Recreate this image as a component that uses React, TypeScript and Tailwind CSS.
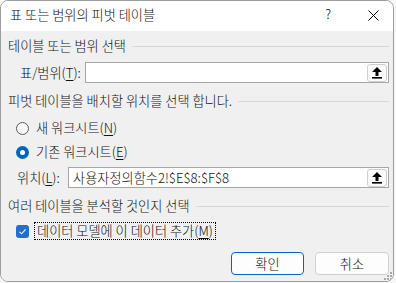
import React from "react";

const font = { fontFamily: '"Noto Sans CJK KR", "Noto Sans", sans-serif' };

const UploadIcon = () => (
    <svg width="12" height="13" viewBox="0 0 12 13">
        <path d="M6 1 L11 6 L7.5 6 L7.5 10 L4.5 10 L4.5 6 L1 6 Z" fill="#000" />
        <rect x="1" y="11" width="10" height="1.6" fill="#000" />
    </svg>
);

const SectionHeader = ({ title, className }: { title: string; className?: string }) => (
    <div className={`flex items-center h-[16px] ${className ?? ""}`}>
        <span className="whitespace-nowrap leading-[16px]">{title}</span>
        <div className="flex-1 h-px bg-[#d9d9d9] ml-[6px]"></div>
    </div>
);

const RefInput = ({ value }: { value?: string }) => (
    <div className="flex-1 h-[21px] bg-white border border-[#a6a6a6] flex items-center">
        <span className="flex-1 pl-[4px] leading-[18px] whitespace-nowrap">{value}</span>
        <button className="w-[20px] h-[18px] mr-px border border-[#d0d0d0] rounded-[3px] bg-[#fbfbfb] flex items-center justify-center">
            <UploadIcon />
        </button>
    </div>
);

const App: React.FC = () => {
    return (
        <div className="w-[396px] h-[283px] bg-[#f7f7f7] text-[13.2px] text-[#111] font-light" style={font}>
            <div className="w-[394px] h-[282px] border border-[#9c9c9c] rounded-[8px] overflow-hidden flex flex-col">
                {/* title bar */}
                <div className="h-[30px] bg-white flex items-center pl-[9px] pb-[2px] shrink-0">
                    <span className="leading-[16px]">표 또는 범위의 피벗 테이블</span>
                    <div className="flex-1"></div>
                    <span className="text-[13px] leading-[16px] mr-[37px] -mt-[2px]">?</span>
                    <svg width="11" height="11" viewBox="0 0 11 11" className="mr-[14px]">
                        <path d="M0.5 0.5 L10.5 10.5 M10.5 0.5 L0.5 10.5" stroke="#000" strokeWidth="1" />
                    </svg>
                </div>

                {/* body */}
                <div className="flex-1 bg-[#f0f0f0] relative pl-[7px] pr-[4px] pt-[7px] flex flex-col">
                    <SectionHeader title="테이블 또는 범위 선택" />

                    <div className="flex items-center mt-[8px] pl-[12px]">
                        <span className="w-[65px] leading-[16px] whitespace-nowrap">
                            표/범위(<span className="underline underline-offset-2">T</span>):
                        </span>
                        <RefInput />
                    </div>

                    <SectionHeader title="피벗 테이블을 배치할 위치를 선택 합니다." className="mt-[10px]" />

                    <div className="flex items-center mt-[11px] pl-[8px] h-[16px]">
                        <div className="w-[13px] h-[13px] rounded-full border border-[#5c5c5c] bg-[#f6f6f6]"></div>
                        <span className="ml-[7px] leading-[16px]">
                            새 워크시트(<span className="underline underline-offset-2">N</span>)
                        </span>
                    </div>

                    <div className="flex items-center mt-[8px] pl-[8px] h-[16px]">
                        <div className="w-[13px] h-[13px] rounded-full bg-[#0067c0] flex items-center justify-center">
                            <div className="w-[5px] h-[5px] rounded-full bg-white"></div>
                        </div>
                        <span className="ml-[7px] leading-[16px]">
                            기존 워크시트(<span className="underline underline-offset-2">E</span>)
                        </span>
                    </div>

                    <div className="flex items-center mt-[7px] pl-[9px]">
                        <span className="w-[51px] leading-[16px] whitespace-nowrap">
                            위치(<span className="underline underline-offset-2">L</span>):
                        </span>
                        <RefInput value="사용자정의함수2!$E$8:$F$8" />
                    </div>

                    <SectionHeader title="여러 테이블을 분석할 것인지 선택" className="mt-[10px]" />

                    <div className="flex items-center mt-[8px] pl-[8px] h-[18px]">
                        <div className="w-[13px] h-[13px] rounded-[3px] bg-[#1f6fd1] flex items-center justify-center">
                            <svg width="9" height="9" viewBox="0 0 9 9">
                                <path d="M1.5 4.8 L3.6 6.8 L7.6 2.4" stroke="#fff" strokeWidth="1.1" fill="none" />
                            </svg>
                        </div>
                        <span className="ml-[5px] h-[18px] px-[2px] border border-dotted border-black leading-[16px] whitespace-nowrap">
                            데이터 모델에 이 데이터 추가(<span className="underline underline-offset-2">M</span>)
                        </span>
                    </div>

                    <div className="flex justify-end gap-[11px] mt-[12px]">
                        <button className="w-[73px] h-[23px] rounded-[4px] bg-[#fdfdfd] border border-[#0067c0] leading-[16px]">
                            확인
                        </button>
                        <button className="w-[74px] h-[23px] rounded-[4px] bg-[#fdfdfd] border border-[#d0d0d0] leading-[16px]">
                            취소
                        </button>
                    </div>

                    {/* resize grip */}
                    <svg width="10" height="10" viewBox="0 0 10 10" className="absolute right-0 bottom-0">
                        <rect x="7" y="1" width="2" height="2" fill="#a8a8a8" />
                        <rect x="4" y="4" width="2" height="2" fill="#a8a8a8" />
                        <rect x="7" y="4" width="2" height="2" fill="#a8a8a8" />
                        <rect x="1" y="7" width="2" height="2" fill="#a8a8a8" />
                        <rect x="4" y="7" width="2" height="2" fill="#a8a8a8" />
                        <rect x="7" y="7" width="2" height="2" fill="#a8a8a8" />
                    </svg>
                </div>
            </div>
        </div>
    );
};

export default App;
